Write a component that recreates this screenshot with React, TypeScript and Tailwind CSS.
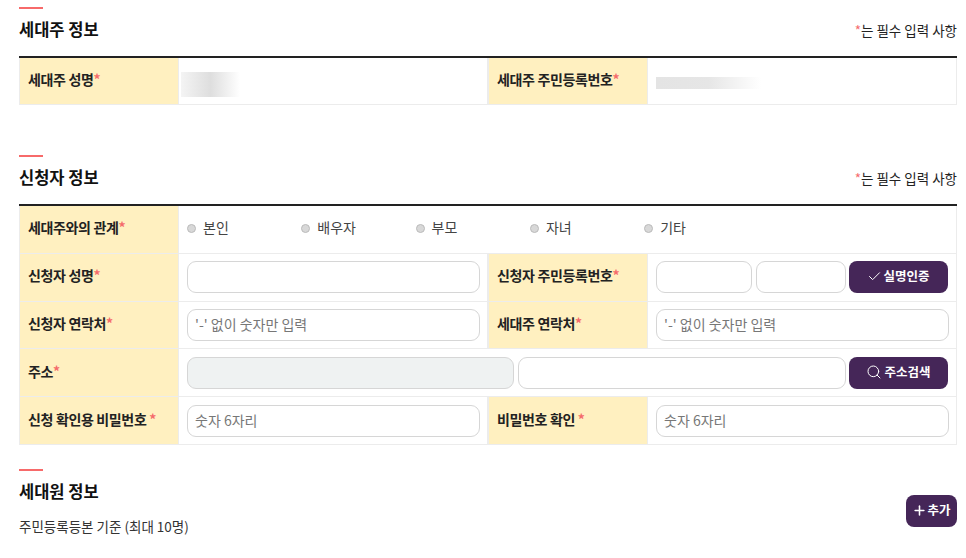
import { Check, Plus, Search } from 'lucide-react';
import type { ReactNode } from 'react';

const labelCls =
  'flex items-center bg-[#fff0c0] pl-[8px] pb-[3px] text-[14px] font-bold tracking-[-0.35px] text-[#222] border-r border-b border-[#ececec] border-l';
const valueCls = 'flex items-center border-r border-b border-[#ececec] pl-2 pr-[7px] min-w-0';
const inputCls =
  'h-[32px] w-full min-w-0 rounded-[9px] border border-[#d6d6d6] bg-white pl-[7px] pr-2 pb-[2px] text-[14px] text-[#333] placeholder:text-[#777] outline-none';
const btnCls =
  'flex h-[32px] items-center justify-center rounded-[8px] bg-[#452658] pb-[1px] text-[12.5px] font-bold text-white shrink-0';

function Star() {
  return <span className="text-[#f56b6b]">*</span>;
}

function Label({ children }: { children: ReactNode }) {
  return (
    <div className={labelCls}>
      <span>
        {children}
        <Star />
      </span>
    </div>
  );
}

function SectionHead({ title, note = true }: { title: string; note?: boolean }) {
  return (
    <div>
      <div className="h-[2px] w-[24px] bg-[#f76a6a]" />
      <div className="mt-[8px] flex items-end justify-between">
        <h2 className="text-[16.5px] leading-[24px] font-bold text-[#111]">{title}</h2>
        {note && (
          <p className="mb-[1px] text-[13.5px] leading-[20px] text-[#222]">
            <Star />는 필수 입력 사항
          </p>
        )}
      </div>
    </div>
  );
}

function Radio({ label }: { label: string }) {
  return (
    <label className="flex w-[114.3px] items-center gap-[7px] pb-[4px] text-[14px] text-[#444]">
      <span className="mt-[2px] h-[9px] w-[9px] rounded-full border border-[#bbb] bg-[#d8d8d8]" />
      {label}
    </label>
  );
}

export default function App() {
  return (
    <div
      className="h-[558px] w-[966px] overflow-hidden bg-white pt-[7px] pr-[9px] pl-[19px]"
      style={{ fontFamily: '"Noto Sans CJK KR", "Noto Sans", sans-serif' }}
    >
      {/* 세대주 정보 */}
      <SectionHead title="세대주 정보" />
      <div className="mt-[15px] grid h-[49px] grid-cols-[160px_309px_160px_309px] border-t-2 border-[#222]">
        <Label>세대주 성명</Label>
        <div className={valueCls + ' !pl-[2px]'}>
          <div className="mt-[6px] h-[25px] w-[59px] bg-gradient-to-r from-[#f4f4f4] via-[#dedede] to-white" />
        </div>
        <Label>세대주 주민등록번호</Label>
        <div className={valueCls}>
          <div className="mt-[3px] h-[12px] w-[105px] bg-gradient-to-r from-[#e4e4e4] via-[#e6e6e6] to-white" />
        </div>
      </div>

      {/* 신청자 정보 */}
      <div className="mt-[50px]">
        <SectionHead title="신청자 정보" />
      </div>
      <div className="mt-[15px] grid grid-cols-[160px_309px_160px_309px] auto-rows-[47.8px] border-t-2 border-[#222]">
        <Label>세대주와의 관계</Label>
        <div className={valueCls + ' col-span-3'}>
          <Radio label="본인" />
          <Radio label="배우자" />
          <Radio label="부모" />
          <Radio label="자녀" />
          <Radio label="기타" />
        </div>

        <Label>신청자 성명</Label>
        <div className={valueCls}>
          <input className={inputCls} />
        </div>
        <Label>신청자 주민등록번호</Label>
        <div className={valueCls + ' gap-[4px]'}>
          <input className={inputCls + ' !w-[96px] shrink-0'} />
          <input className={inputCls + ' !w-[90px] shrink-0'} />
          <button className={btnCls + ' -ml-[1px] w-[99px]'}>
            <Check size={15} strokeWidth={1.6} className="mr-[1px]" />
            실명인증
          </button>
        </div>

        <Label>신청자 연락처</Label>
        <div className={valueCls}>
          <input className={inputCls} placeholder="'-' 없이 숫자만 입력" />
        </div>
        <Label>세대주 연락처</Label>
        <div className={valueCls}>
          <input className={inputCls} placeholder="'-' 없이 숫자만 입력" />
        </div>

        <Label>주소</Label>
        <div className={valueCls + ' col-span-3 gap-[4px]'}>
          <input className={inputCls + ' !w-[327px] shrink-0 !bg-[#eff2f2]'} readOnly />
          <input className={inputCls + ' !w-[328px] shrink-0'} />
          <button className={btnCls + ' -ml-[1px] w-[99px]'}>
            <Search size={16} strokeWidth={1.5} className="mr-[2px]" />
            주소검색
          </button>
        </div>

        <div className={labelCls}>
          <span>
            신청 확인용 비밀번호 <Star />
          </span>
        </div>
        <div className={valueCls}>
          <input className={inputCls} placeholder="숫자 6자리" />
        </div>
        <div className={labelCls}>
          <span>
            비밀번호 확인 <Star />
          </span>
        </div>
        <div className={valueCls}>
          <input className={inputCls} placeholder="숫자 6자리" />
        </div>
      </div>

      {/* 세대원 정보 */}
      <div className="mt-[24px] flex items-start justify-between">
        <div>
          <SectionHead title="세대원 정보" note={false} />
          <p className="mt-[13px] text-[13.5px] leading-[20px] text-[#333]">주민등록등본 기준 (최대 10명)</p>
        </div>
        <button className={btnCls + ' mt-[26px] w-[51px]'}>
          <Plus size={15} strokeWidth={2.5} />
          추가
        </button>
      </div>
    </div>
  );
}
